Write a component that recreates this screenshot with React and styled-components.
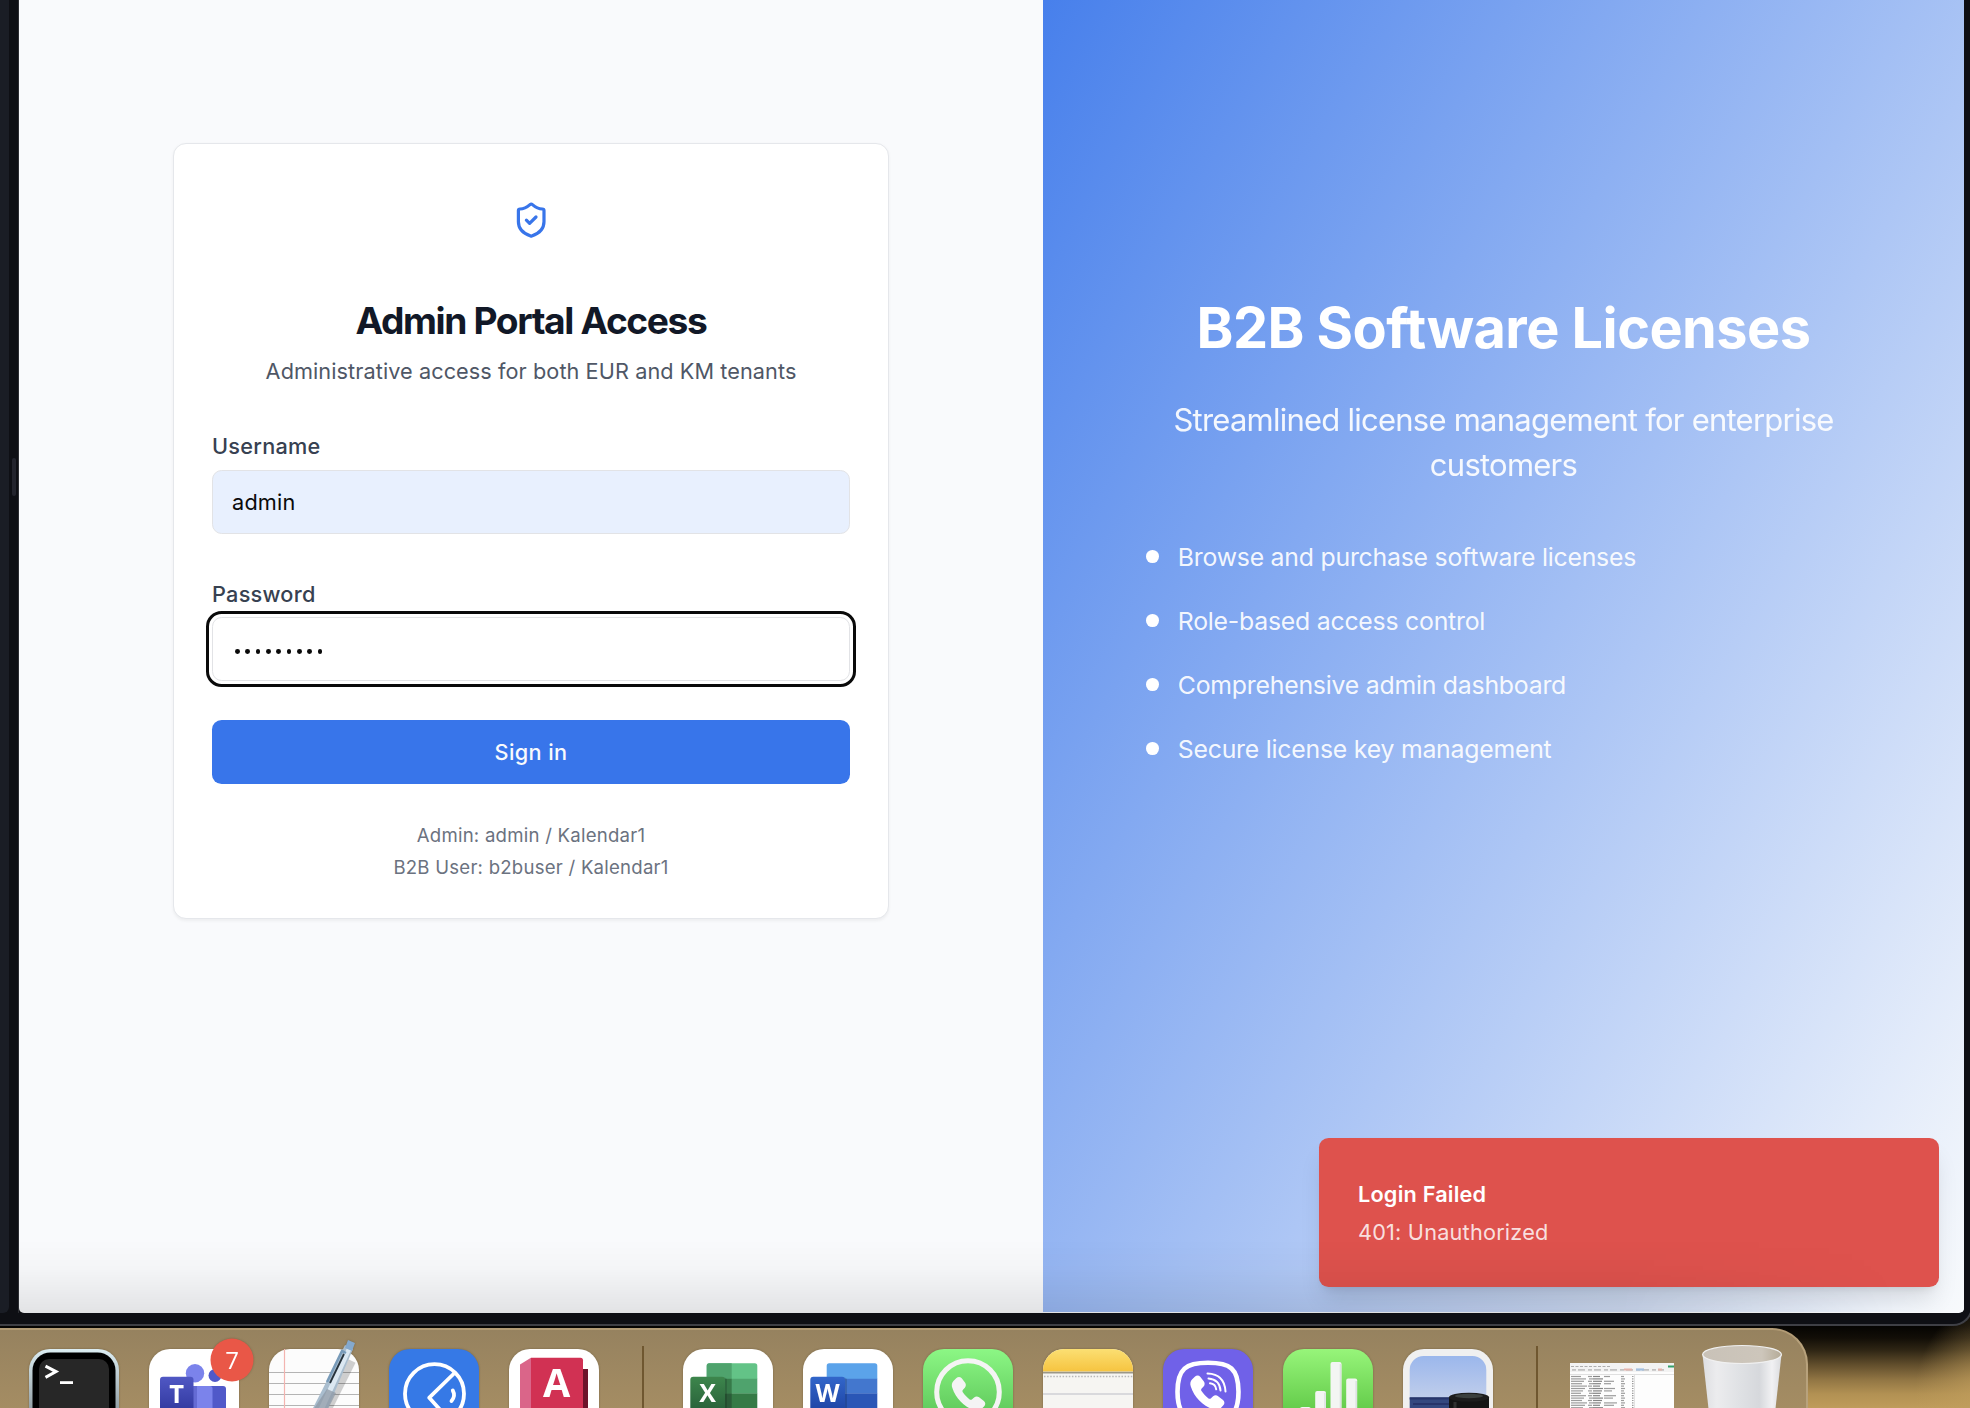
import React from 'react';
import styled, { createGlobalStyle } from 'styled-components';

const GlobalStyle = createGlobalStyle`
  html, body { margin: 0; padding: 0; background: #0c0a06; }
  *, *::before, *::after { box-sizing: border-box; }
  h1, h2, p, ul { margin: 0; padding: 0; }
`;

/* ---------- desktop and browser window ---------- */

const Desktop = styled.div`
  width: 1970px;
  height: 1408px;
  overflow: hidden;
  display: flex;
  flex-direction: column;
  font-family: Inter, 'Noto Sans', sans-serif;
  background:
    radial-gradient(ellipse 70px 90px at 1985px 1395px, rgba(193, 158, 92, 0.8), rgba(193, 158, 92, 0) 100%),
    linear-gradient(180deg, #050402 1326px, #120e07 1338px, #2e2514 1350px, #5f4c2b 1364px, #927644 1380px, #b29153 1394px, #bf9c5b 1408px);
`;

const BrowserWindow = styled.div`
  width: 1973px;
  height: 1326px;
  flex: none;
  display: flex;
  padding-bottom: 11px;
  background: #0e0f14;
  border-right: 2px solid #3e3f45;
  border-bottom: 2px solid #3e3f45;
  border-bottom-right-radius: 20px;
`;

const EdgePanel = styled.div`
  width: 9px;
  background: #1a1d25;
  border-bottom-right-radius: 6px;
`;

const Gutter = styled.div`
  width: 10px;
  display: flex;
  justify-content: center;
  padding: 458px 0 0 0;
  border-right: 1px solid #2d2e33;
`;

const GutterHandle = styled.span`
  width: 4px;
  height: 38px;
  border-radius: 2px;
  background: #23242d;
`;

const Page = styled.div`
  position: relative;
  width: 1945px;
  height: 1313px;
  display: grid;
  grid-template-columns: 1024px 921px;
  background: #f9fafc;
  border-radius: 0 0 5px 5px;
  overflow: hidden;
`;

const DockShade = styled.div`
  position: absolute;
  left: 0;
  right: 0;
  bottom: 0;
  height: 74px;
  pointer-events: none;
  background: linear-gradient(180deg, rgba(0, 0, 0, 0), rgba(0, 0, 0, 0.02) 40%, rgba(0, 0, 0, 0.09));
  mask-image: linear-gradient(90deg, #000 1600px, transparent 1880px);
`;

/* ---------- sign-in card ---------- */

const SignInSide = styled.main`
  display: flex;
  flex-direction: column;
  align-items: center;
  padding-top: 143px;
`;

const Card = styled.section`
  width: 716px;
  height: 776px;
  display: flex;
  flex-direction: column;
  padding: 57px 38px 0;
  background: #fff;
  border: 1px solid #e5e7eb;
  border-radius: 13px;
  box-shadow: 0 1.6px 3.2px rgba(0, 0, 0, 0.05);
`;

const ShieldIcon = styled.svg`
  align-self: center;
  width: 38.4px;
  height: 38.4px;
  fill: none;
  stroke: #3875ea;
  stroke-width: 2;
  stroke-linecap: round;
  stroke-linejoin: round;
`;

const CardTitle = styled.h1`
  margin-top: 62px;
  font-size: 37.2px;
  line-height: 40px;
  font-weight: 700;
  letter-spacing: -1.4px;
  text-align: center;
  color: #111827;
`;

const CardSubtitle = styled.p`
  margin-top: 14px;
  font-size: 21.7px;
  line-height: 32px;
  letter-spacing: 0.07px;
  text-align: center;
  color: #4f5766;
`;

const Label = styled.label`
  margin-top: ${(p) => p.$gap}px;
  font-size: 21.7px;
  line-height: 22px;
  font-weight: 450;
  letter-spacing: 0.25px;
  color: #374151;
`;

const Field = styled.div`
  height: 64px;
  display: flex;
  align-items: center;
  gap: 5.53px;
  margin-top: ${(p) => (p.$focused ? 12 : 13)}px;
  padding: 0 ${(p) => (p.$focused ? 22 : 19)}px;
  font-size: 21.7px;
  letter-spacing: 0.2px;
  color: #0a0a0a;
  background: ${(p) => (p.$filled ? '#e8f0fe' : '#fff')};
  border: 1px solid #e2e3e6;
  border-radius: 9.6px;
  outline: ${(p) => (p.$focused ? '3px solid #0a0a0a' : 'none')};
  outline-offset: 3.4px;
`;

const MaskDot = styled.span`
  width: 4.8px;
  height: 4.8px;
  margin-top: 5px;
  border-radius: 50%;
  background: #0a0a0a;
`;

const SubmitButton = styled.button`
  height: 64px;
  margin-top: 39px;
  border: 0;
  border-radius: 9.6px;
  background: #3875ea;
  color: #f8fafc;
  font: 450 21.7px Inter, sans-serif;
  letter-spacing: 0.4px;
`;

const Hints = styled.div`
  margin-top: 35px;
  font-size: 18.6px;
  line-height: 32px;
  letter-spacing: 0.23px;
  text-align: center;
  color: #6b7280;
`;

/* ---------- marketing side ---------- */

const PromoSide = styled.aside`
  display: flex;
  flex-direction: column;
  align-items: center;
  height: 1312px;
  padding-top: 296px;
  color: #fff;
  background: linear-gradient(to bottom right, #3875ea, #f8fafc) bottom / 100% 1562px no-repeat;
`;

const PromoContent = styled.div`
  width: 717px;
`;

const PromoTitle = styled.h2`
  font-size: 55.8px;
  line-height: 64px;
  font-weight: 700;
  letter-spacing: -0.54px;
  text-align: center;
`;

const PromoText = styled.p`
  margin-top: 38px;
  font-size: 31px;
  line-height: 44.8px;
  letter-spacing: -0.76px;
  text-align: center;
  opacity: 0.92;
`;

const FeatureList = styled.ul`
  display: flex;
  flex-direction: column;
  gap: 25.6px;
  margin: 50.2px 0 0 0.8px;
  list-style: none;
`;

const Feature = styled.li`
  display: flex;
  align-items: center;
  gap: 19.2px;
  font-size: 24.8px;
  line-height: 38.4px;
  letter-spacing: -0.22px;
  color: rgba(255, 255, 255, 0.93);

  &::before {
    content: '';
    width: 12.8px;
    height: 12.8px;
    margin-top: -1px;
    border-radius: 50%;
    background: #fff;
  }
`;

/* ---------- toast ---------- */

const Toast = styled.div`
  position: absolute;
  right: 25px;
  bottom: 26px;
  width: 620px;
  height: 149px;
  display: flex;
  flex-direction: column;
  gap: 6px;
  padding: 40px 39px;
  border-radius: 9.6px;
  background: #de524d;
  color: #fff;
  font-size: 21.7px;
  line-height: 32px;
  letter-spacing: 0.2px;
  box-shadow: 0 16px 24px -5px rgba(0, 0, 0, 0.12), 0 6px 10px -6px rgba(0, 0, 0, 0.12);
`;

const ToastTitle = styled.div`
  font-weight: 600;
`;

const ToastText = styled.div`
  color: rgba(255, 255, 255, 0.84);
`;

/* ---------- dock ---------- */

const Dock = styled.nav`
  width: 1808px;
  height: 120px;
  flex: none;
  display: flex;
  align-items: flex-start;
  gap: 30px;
  margin-top: 2px;
  padding: 19px 0 0 29px;
  background: linear-gradient(180deg, #96825f 0, #a58d63 80px);
  border-top: 2px solid #b29b75;
  border-right: 2px solid #b8a27c;
  border-top-right-radius: 36px;
`;

const Tile = styled.svg`
  width: 90px;
  height: 90px;
  flex: none;
  overflow: visible;
  filter: drop-shadow(0 0 1px rgba(60, 45, 20, 0.35));
`;

const Divider = styled.span`
  width: 2px;
  height: 90px;
  flex: none;
  margin: -3px ${(p) => p.$after}px 0 13px;
  background: #6f5730;
`;

const SheetThumb = styled.svg`
  width: 104px;
  height: 70px;
  flex: none;
  margin-top: 14px;
`;

const Trash = styled.svg`
  width: 80px;
  height: 90px;
  flex: none;
  margin: -4px 0 0 -2px;
  overflow: visible;
`;

const Glyph = styled.text`
  font-family: 'Open Sans', 'Noto Sans', sans-serif;
  font-size: ${(p) => p.$size}px;
  font-weight: ${(p) => p.$weight || 700};
  fill: #fff;
  text-anchor: middle;
`;

const Fade = ({ id, from, to }) => (
  <linearGradient id={id} x1="0" y1="0" x2="0" y2="1">
    <stop offset="0" stopColor={from} />
    <stop offset="1" stopColor={to} />
  </linearGradient>
);

const TerminalIcon = () => (
  <Tile viewBox="0 0 90 90">
    <Fade id="term" from="#dcedf2" to="#6f7a80" />
    <rect width="90" height="90" rx="21" fill="url(#term)" />
    <rect x="3.5" y="3.5" width="83" height="83" rx="18" fill="#000" />
    <rect x="10" y="10" width="70" height="70" rx="10" fill="#272727" />
    <path d="M16.5 17.2 27 22.6 16.5 28.4" fill="none" stroke="#fff" strokeWidth="3" />
    <path d="M31 33.6h13" stroke="#fff" strokeWidth="2.8" />
  </Tile>
);

const TeamsIcon = () => (
  <Tile viewBox="0 0 90 90">
    <Fade id="teams" from="#5058c4" to="#3239a0" />
    <rect width="90" height="90" rx="21" fill="#fff" />
    <circle cx="46" cy="24.3" r="9.2" fill="#7b83eb" />
    <circle cx="66" cy="26.5" r="6.5" fill="#5059c9" />
    <path d="M56 37h18a3 3 0 0 1 3 3v25H56z" fill="#5059c9" />
    <path d="M38 37h23a2.5 2.5 0 0 1 2.5 2.5V70H38z" fill="#7b83eb" />
    <rect x="40" y="37" width="8" height="40" fill="#646bd4" />
    <rect x="11" y="27.7" width="33.5" height="34" rx="3" fill="url(#teams)" />
    <Glyph x="27.7" y="53.8" $size={25.5} $weight={700}>T</Glyph>
    <circle cx="83" cy="11" r="21.5" fill="#e95747" />
    <Glyph x="83" y="19.5" $size={24} $weight={400}>7</Glyph>
  </Tile>
);

const TextEditIcon = () => (
  <Tile viewBox="0 0 90 90">
    <rect width="90" height="90" rx="21" fill="#fcfcfc" />
    <path d="M0 23.5h90M0 34.5h90M0 45.5h90M0 56.5h90" stroke="#b4b4b4" strokeWidth="1" />
    <path d="M15.5 0v90" stroke="#f3b4b0" strokeWidth="1.2" />
    <path d="M83 12 56 66" stroke="#000" strokeOpacity=".18" strokeWidth="8" />
    <path d="m76-4 8 4-29 68-13-5z" fill="#a9bdce" />
    <path d="m79-3 4 2-30 66-5-2z" fill="#dbe8f2" />
    <path d="m79-9 7 3-3 8-7-3z" fill="#84a9ce" />
    <path d="m58 33 15-31 4 2" fill="none" stroke="#789bb9" strokeWidth="2.5" />
    <path d="M61 34 75 5" stroke="#27333c" strokeWidth="1.8" />
    <path d="m58 40 9 4-13 26-12-6z" fill="#8f9aa5" fillOpacity=".75" />
  </Tile>
);

const CompassIcon = () => (
  <Tile viewBox="0 0 90 90">
    <rect width="90" height="90" rx="21" fill="#3679e6" />
    <g fill="none" stroke="#fff" strokeWidth="3.8" strokeLinejoin="round" strokeLinecap="round">
      <circle cx="45.5" cy="44.7" r="29.5" />
      <path d="M65 24.5 40.3 48.7 54 64" />
      <path d="M63.8 41.5q3 5.5 -1.3 10.5" />
    </g>
  </Tile>
);

const CadIcon = () => (
  <Tile viewBox="0 0 90 90">
    <rect width="90" height="90" rx="21" fill="#fff" />
    <path d="M70 20h9v55h-9z" fill="#6d142b" />
    <path d="m11 15.5 11-6.8V80H11z" fill="#da6589" />
    <path d="M22 8.7h49.5a2.5 2.5 0 0 1 2.5 2.5V80H22z" fill="#d13153" />
    <Glyph x="47.7" y="48.4" $size={39.5}>A</Glyph>
  </Tile>
);

const OfficeIcon = ({ name, letter, rows, side, square }) => (
  <Tile viewBox="0 0 90 90">
    <Fade id={name} from={square[0]} to={square[1]} />
    <rect width="90" height="90" rx="21" fill="#fff" />
    <path d="M23.7 30V16.8a2.5 2.5 0 0 1 2.5-2.5h45.6a2.5 2.5 0 0 1 2.5 2.5V30z" fill={rows[0]} />
    <path d="M23.7 29.7h50.6v15H23.7z" fill={rows[1]} />
    <path d="M23.7 44.5h50.6v30H23.7z" fill={rows[2]} />
    {side && (
      <>
        <path d="M23.7 29.7V16.8a2.5 2.5 0 0 1 2.5-2.5h22.5v15.4z" fill={side[0]} />
        <path d="M23.7 29.7h25v15h-25z" fill={side[1]} />
        <path d="M23.7 44.5h25v30h-25z" fill={side[2]} />
      </>
    )}
    <rect x="8" y="28.5" width="36" height="36" rx="3" fill="#000" fillOpacity=".15" />
    <rect x="7.3" y="27.7" width="34.7" height="35" rx="3" fill={`url(#${name})`} />
    <Glyph x="24.7" y="53.4" $size={25}>{letter}</Glyph>
  </Tile>
);

const handset =
  'M6.6 1.2C5.6.1 4.2.1 3.2 1L1.4 2.7C.2 3.9-.1 5.6.5 7.3c2.3 6.9 7.3 12 14.2 14.6 1.7.6 3.5.3 4.7-.9l1.7-1.8c1-1 .9-2.5-.2-3.4l-3.1-2.4c-1-.8-2.3-.7-3.2.1l-1.3 1.2c-.5.4-1.1.5-1.6.1-1.7-1.3-3.2-2.8-4.4-4.6-.4-.5-.3-1.1.1-1.6l1.2-1.3c.8-.9.9-2.2.2-3.2z';

const WhatsAppIcon = () => (
  <Tile viewBox="0 0 90 90">
    <Fade id="wa" from="#8cf785" to="#4fb84c" />
    <rect width="90" height="90" rx="21" fill="url(#wa)" />
    <path d="m12 79 5-18 13 13z" fill="#f4f4f4" />
    <circle cx="45" cy="43" r="31.3" fill="none" stroke="#f4f4f4" strokeWidth="5" />
    <path d={handset} fill="#f4f4f4" transform="translate(28.5 27.5) scale(1.55)" />
  </Tile>
);

const NotesIcon = () => (
  <Tile viewBox="0 0 90 90">
    <Fade id="notes" from="#fbdf73" to="#f6c440" />
    <rect width="90" height="90" rx="21" fill="#f6f5f2" />
    <path d="M0 22.5V21A21 21 0 0 1 21 0h48a21 21 0 0 1 21 21v1.5z" fill="url(#notes)" />
    <path d="M0 23.6h90" stroke="#9b9788" strokeWidth="1.8" />
    <path d="M1 27.5h89" stroke="#b8b8b8" strokeWidth="1.7" strokeDasharray="1.5 1.6" />
    <path d="M0 45h90" stroke="#d9d9dc" strokeWidth="1.8" />
  </Tile>
);

const ViberIcon = () => (
  <Tile viewBox="0 0 90 90">
    <rect width="90" height="90" rx="21" fill="#7061e8" />
    <path
      d="M45 13.8c22 0 30.5 5.5 30.5 29S67 72 45 72s-30.5-6-30.5-29.2S23 13.8 45 13.8z"
      fill="none" stroke="#fff" strokeWidth="4.6"
    />
    <path d={handset} fill="#fff" transform="translate(27 26) scale(1.58)" />
    <g fill="none" stroke="#fff" strokeWidth="2" strokeLinecap="round">
      <path d="M44.5 24.5q17 .5 18 18" />
      <path d="M45.5 29.5q11 .8 12 12" />
      <path d="M47 34.3q5.5.7 6.2 6" />
    </g>
  </Tile>
);

const NumbersIcon = () => (
  <Tile viewBox="0 0 90 90">
    <Fade id="nums" from="#97f57a" to="#4cb834" />
    <rect width="90" height="90" rx="21" fill="url(#nums)" />
    <g fill="#f3f5f3">
      <rect x="17" y="58" width="10.8" height="30" rx="2" />
      <rect x="32.2" y="42" width="10.8" height="46" rx="2" />
      <rect x="47.5" y="13" width="11" height="75" rx="2" />
      <rect x="63.2" y="29.5" width="11" height="59" rx="2" />
    </g>
    <path d="M42 44v40M57.5 15v70M73.200 32v50" stroke="#dde2e1" strokeWidth="1.6" />
  </Tile>
);

const PreviewIcon = () => (
  <Tile viewBox="0 0 90 90">
    <Fade id="sky" from="#9bb7ec" to="#bfcdeb" />
    <rect width="90" height="90" rx="21" fill="#f0f0f0" />
    <path d="M6.7 48.5V21A14 14 0 0 1 20.7 7h48.6a14 14 0 0 1 14 14v27.5z" fill="url(#sky)" />
    <path d="M6.7 48.2h76.6V80H6.7z" fill="#34487f" />
    <path d="M6.7 49.5h76.6M10 55h60" stroke="#27346a" strokeWidth="2" />
    <path d="M46 48v32h40V48z" fill="#141414" />
    <ellipse cx="66" cy="48.3" rx="20" ry="4.5" fill="#1c1c1c" />
    <ellipse cx="66" cy="47" rx="14" ry="2.2" fill="#3a3f3d" />
    <path d="M52 53v27" stroke="#303030" strokeWidth="3" />
  </Tile>
);

const sheetRows = Array.from({ length: 14 }, (_, i) => i);

const SheetIcon = () => (
  <SheetThumb viewBox="0 0 104 70">
    <rect width="104" height="70" fill="#fdfdfd" />
    <rect width="104" height="9" fill="#f3f3f3" />
    <path d="M1 3.5h40" stroke="#a6a6a6" strokeDasharray="3 1.5" strokeWidth=".9" />
    <path d="M2 6.8h92" stroke="#c2c2c2" strokeDasharray="4 2 7 3" strokeWidth="1.8" />
    <path d="M54 6.5h8M88 6.5h4" stroke="#e5b3ab" strokeWidth="2.2" />
    <path d="M66 6.5h8" stroke="#a3c0e0" strokeWidth="2.2" />
    <rect x="98" y="2.5" width="6" height="2" fill="#34a06a" />
    <path d="M0 11.5h104" stroke="#e0e0e0" />
    {sheetRows.map((i) => (
      <g key={i} stroke="#9c9c9c" strokeWidth="1.2">
        <path d={`M1 ${13.5 + i * 2.4}h${10 + ((i * 5) % 7)}`} />
        <path d={`M${18 + (i % 2)} ${13.5 + i * 2.4}h4`} />
        <path d={`M23 ${13.5 + i * 2.4}h${7 + ((i * 3) % 4)}`} stroke="#858585" />
        {i % 3 !== 1 && <path d={`M34 ${13.5 + i * 2.4}h${6 + ((i * 7) % 10)}`} />}
        <path d={`M51 ${13.5 + i * 2.4}h${3 + (i % 2)}`} />
        <path d={`M62 ${13.5 + i * 2.4}h1.5`} />
      </g>
    ))}
    <path d="M64.5 12v58" stroke="#dadada" strokeWidth=".8" />
  </SheetThumb>
);

const TrashIcon = () => (
  <Trash viewBox="0 0 80 90">
    <defs>
      <linearGradient id="cup">
        <stop offset="0" stopColor="#dddee1" />
        <stop offset=".18" stopColor="#ececee" />
        <stop offset=".45" stopColor="#e0e2e5" />
        <stop offset=".72" stopColor="#d6d8dc" />
        <stop offset=".88" stopColor="#f1f1f3" />
        <stop offset="1" stopColor="#dadbde" />
      </linearGradient>
      <linearGradient id="cupInside">
        <stop offset="0" stopColor="#c9c2b8" />
        <stop offset=".75" stopColor="#cdc6bb" />
        <stop offset="1" stopColor="#b5ab98" />
      </linearGradient>
    </defs>
    <path d="M.5 9.500 9 86h62l8.500-76.500z" fill="url(#cup)" />
    <ellipse cx="40" cy="9.5" rx="39.4" ry="9" fill="url(#cupInside)" stroke="#f0f0f0" strokeWidth="1.2" />
  </Trash>
);

const features = [
  'Browse and purchase software licenses',
  'Role-based access control',
  'Comprehensive admin dashboard',
  'Secure license key management',
];

const passwordLength = 9;

export default function App() {
  return (
    <Desktop>
      <GlobalStyle />
      <BrowserWindow>
        <EdgePanel />
        <Gutter>
          <GutterHandle />
        </Gutter>
        <Page>
          <SignInSide>
            <Card>
              <ShieldIcon viewBox="0 0 24 24">
                <path d="M20 13c0 5-3.5 7.5-7.66 8.95a1 1 0 0 1-.67-.01C7.5 20.5 4 18 4 13V6a1 1 0 0 1 1-1c2 0 4.5-1.2 6.24-2.72a1.17 1.17 0 0 1 1.52 0C14.51 3.81 17 5 19 5a1 1 0 0 1 1 1z" />
                <path d="m9 12 2 2 4-4" />
              </ShieldIcon>
              <CardTitle>Admin Portal Access</CardTitle>
              <CardSubtitle>Administrative access for both EUR and KM tenants</CardSubtitle>
              <Label $gap={48}>Username</Label>
              <Field $filled>admin</Field>
              <Label $gap={49}>Password</Label>
              <Field $focused>
                {Array.from({ length: passwordLength }, (_, i) => (
                  <MaskDot key={i} />
                ))}
              </Field>
              <SubmitButton>Sign in</SubmitButton>
              <Hints>
                <p>Admin: admin / Kalendar1</p>
                <p>B2B User: b2buser / Kalendar1</p>
              </Hints>
            </Card>
          </SignInSide>
          <PromoSide>
            <PromoContent>
              <PromoTitle>B2B Software Licenses</PromoTitle>
              <PromoText>Streamlined license management for enterprise customers</PromoText>
              <FeatureList>
                {features.map((f) => (
                  <Feature key={f}>{f}</Feature>
                ))}
              </FeatureList>
            </PromoContent>
          </PromoSide>
          <Toast>
            <ToastTitle>Login Failed</ToastTitle>
            <ToastText>401: Unauthorized</ToastText>
          </Toast>
          <DockShade />
        </Page>
      </BrowserWindow>
      <Dock>
        <TerminalIcon />
        <TeamsIcon />
        <TextEditIcon />
        <CompassIcon />
        <CadIcon />
        <Divider $after={9} />
        <OfficeIcon
          name="excel" letter="X"
          rows={['#63c387', '#4fa36d', '#357a46']}
          side={['#4fa36d', '#377a49', '#2b5c39']}
          square={['#3d864c', '#28603a']}
        />
        <OfficeIcon
          name="word" letter="W"
          rows={['#5ba3ea', '#4377ce', '#2a56b6']}
          square={['#3266ca', '#1e44a4']}
        />
        <WhatsAppIcon />
        <NotesIcon />
        <ViberIcon />
        <NumbersIcon />
        <PreviewIcon />
        <Divider $after={2} />
        <SheetIcon />
        <TrashIcon />
      </Dock>
    </Desktop>
  );
}
